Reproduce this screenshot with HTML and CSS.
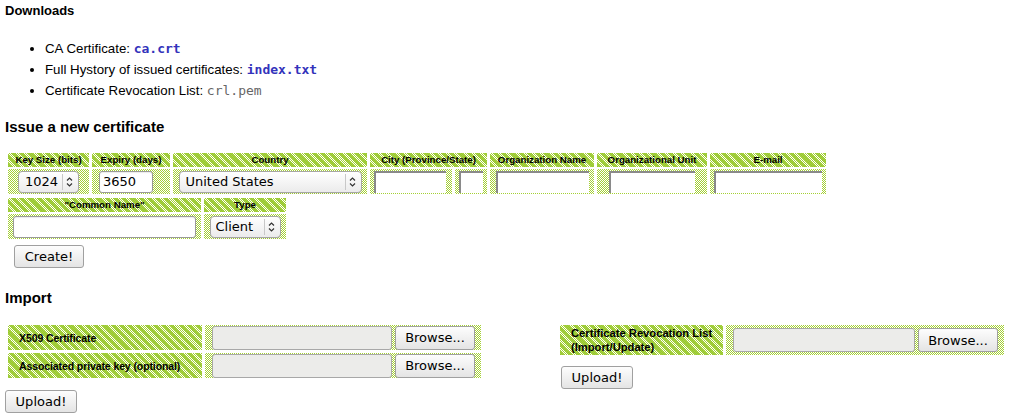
FILE: index.html
```html
<!DOCTYPE html>
<html>
<head>
<meta charset="utf-8">
<link rel="stylesheet" href="styles.css">
</head>
<body>
<h3 class="h-small">Downloads</h3>
<ul class="downloads">
  <li>CA Certificate: <a class="file" href="#">ca.crt</a></li>
  <li>Full Hystory of issued certificates: <a class="file" href="#">index.txt</a></li>
  <li>Certificate Revocation List: <span class="file-off">crl.pem</span></li>
</ul>

<h2 class="h-big h-issue">Issue a new certificate</h2>
<form class="issue">
  <table class="grid grid-top">
    <tr class="head">
      <th class="c-key">Key Size (bits)</th>
      <th class="c-exp">Expiry (days)</th>
      <th class="c-country">Country</th>
      <th colspan="2">City (Province/State)</th>
      <th class="c-org">Organization Name</th>
      <th class="c-unit">Organizational Unit</th>
      <th class="c-mail">E-mail</th>
    </tr>
    <tr class="data">
      <td class="c-key">
        <span class="sel sel-key"><select><option>1024</option></select><svg class="arr" width="14" height="20" viewBox="0 0 14 20"><line x1="0.5" y1="2" x2="0.5" y2="18" stroke="#c8c8c8"/><path d="M5 8.5 L7.5 6 L10 8.5 M5 11.5 L7.5 14 L10 11.5" fill="none" stroke="#333" stroke-width="1.2"/></svg></span>
      </td>
      <td class="c-exp"><input class="txt txt-exp" type="text" value="3650"></td>
      <td class="c-country">
        <span class="sel sel-country"><select><option>United States</option></select><svg class="arr" width="14" height="20" viewBox="0 0 14 20"><line x1="0.5" y1="2" x2="0.5" y2="18" stroke="#c8c8c8"/><path d="M5 8.5 L7.5 6 L10 8.5 M5 11.5 L7.5 14 L10 11.5" fill="none" stroke="#333" stroke-width="1.2"/></svg></span>
      </td>
      <td class="c-city"><input class="old old-city" type="text"></td>
      <td class="c-state"><input class="old old-state" type="text"></td>
      <td class="c-org"><input class="old old-org" type="text"></td>
      <td class="c-unit"><input class="old old-unit" type="text"></td>
      <td class="c-mail"><input class="old old-mail" type="text"></td>
    </tr>
  </table>
  <table class="grid grid-second">
    <tr class="head">
      <th class="c-cn">"Common Name"</th>
      <th class="c-type">Type</th>
    </tr>
    <tr class="data">
      <td class="c-cn"><input class="txt txt-cn" type="text"></td>
      <td class="c-type">
        <span class="sel sel-type"><select><option>Client</option></select><svg class="arr" width="14" height="20" viewBox="0 0 14 20"><line x1="0.5" y1="2" x2="0.5" y2="18" stroke="#c8c8c8"/><path d="M5 8.5 L7.5 6 L10 8.5 M5 11.5 L7.5 14 L10 11.5" fill="none" stroke="#333" stroke-width="1.2"/></svg></span>
      </td>
    </tr>
  </table>
  <button class="btn btn-create" type="button">Create!</button>
</form>

<h2 class="h-big h-import">Import</h2>
<div class="import">
  <form class="imp imp-left">
    <table class="grid grid-imp">
      <tr class="imp-row">
        <th class="lbl lbl-left">X509 Certificate</th>
        <td class="fld"><span class="file-in"><input class="file-txt" type="text" disabled><button class="btn btn-browse" type="button">Browse...</button></span></td>
      </tr>
      <tr class="imp-row">
        <th class="lbl lbl-left">Associated private key (optional)</th>
        <td class="fld"><span class="file-in"><input class="file-txt" type="text" disabled><button class="btn btn-browse" type="button">Browse...</button></span></td>
      </tr>
    </table>
    <button class="btn btn-upload btn-upload-left" type="button">Upload!</button>
  </form>
  <form class="imp imp-right">
    <table class="grid grid-imp">
      <tr class="imp-row">
        <th class="lbl lbl-right">Certificate Revocation List (Import/Update)</th>
        <td class="fld"><span class="file-in"><input class="file-txt" type="text" disabled><button class="btn btn-browse" type="button">Browse...</button></span></td>
      </tr>
    </table>
    <button class="btn btn-upload btn-upload-right" type="button">Upload!</button>
  </form>
</div>
</body>
</html>
```

FILE: styles.css
```css
html, body {
  background: #fff;
}
body {
  margin: 0;
  padding: 3px 5px 0 5px;
  font-family: "Liberation Sans", Arial, sans-serif;
  font-size: 13px;
  color: #000;
}
.h-small {
  font-size: 13px;
  font-weight: bold;
  margin: 0;
  line-height: 15px;
}
.downloads {
  margin: 20px 0 0 0;
  padding: 0 0 0 40px;
  line-height: 21px;
  font-size: 13.3px;
}
.downloads li {
  height: 21px;
}
.file {
  font-family: "DejaVu Sans Mono", monospace;
  font-weight: bold;
  color: #3333bb;
  text-decoration: none;
  font-size: 13px;
}
.file-off {
  font-family: "DejaVu Sans Mono", monospace;
  color: #666;
  font-size: 13px;
}
.h-big {
  font-size: 15px;
  font-weight: bold;
  margin: 0;
  line-height: 18px;
}
.h-issue {
  margin-top: 17px;
}
.issue {
  margin: 0;
}
.grid {
  border-collapse: separate;
  border-spacing: 3px 2px;
  margin-left: 0;
  table-layout: fixed;
}
.grid-top {
  margin-top: 15px;
}
.grid th, .grid td {
  padding: 0;
}
.head th {
  font-size: 9.7px;
  font-weight: bold;
  height: 14px;
  line-height: 14px;
  text-align: center;
  white-space: nowrap;
  background:
    repeating-linear-gradient(45deg, rgba(150, 200, 40, 0.85) 0 3px, rgba(255, 255, 255, 0) 3px 6px),
    conic-gradient(#a5d035 25%, #ffffff 0 50%, #a5d035 0 75%, #ffffff 0) 0 0 / 2px 2px;
}
.data td {
  height: 25px;
  text-align: center;
  vertical-align: middle;
  background: conic-gradient(#a5d035 25%, #ffffff 0 50%, #a5d035 0 75%, #ffffff 0) 0 0 / 2px 2px;
}
.c-key { width: 81px; }
.c-exp { width: 78px; }
.c-country { width: 194px; }
.c-city { width: 82px; }
.c-state { width: 32px; }
.c-org { width: 104px; }
.c-unit { width: 110px; }
.c-mail { width: 116px; }
.c-cn { width: 193px; }
.c-type { width: 82px; }

.sel {
  position: relative;
  display: inline-block;
  vertical-align: middle;
}
.sel select {
  appearance: none;
  -webkit-appearance: none;
  font-family: "DejaVu Sans", sans-serif;
  font-size: 13px;
  color: #000;
  height: 22px;
  border: 1px solid #a6a6a6;
  border-radius: 4px;
  background: linear-gradient(#ffffff, #ebebeb);
  padding: 0 20px 0 6px;
  margin: 0;
  box-shadow: 0 1px 0 rgba(0,0,0,0.05);
  text-align: left;
}
.sel .arr {
  position: absolute;
  right: 3px;
  top: 1px;
  pointer-events: none;
}
.sel-key select { width: 61px; padding-left: 6px; }
.sel-country select { width: 183px; padding-left: 6px; }
.sel-type select { width: 71px; padding-left: 5px; }

.txt {
  font-family: "DejaVu Sans", sans-serif;
  font-size: 13px;
  height: 22px;
  box-sizing: border-box;
  border: 1px solid #9a9a9a;
  border-radius: 3px;
  background: #fff;
  padding: 0 3px;
  margin: 0;
  vertical-align: middle;
  box-shadow: inset 0 1px 1px rgba(0,0,0,0.08);
}
.txt-exp { width: 54px; margin-left: -10px; }
.txt-cn { width: 183px; }

.old {
  box-sizing: border-box;
  height: 22px;
  margin: 0;
  border: 0;
  border-top: 2px solid #8a8a8a;
  border-left: 2px solid #8a8a8a;
  background: #fff;
  vertical-align: middle;
  padding: 0;
}
.old-city { width: 72px; margin-left: -2px; }
.old-state { width: 24px; }
.old-org { width: 93px; }
.old-unit { width: 86px; }
.old-mail { width: 108px; }

.btn {
  font-family: "DejaVu Sans", sans-serif;
  font-size: 13px;
  color: #000;
  border: 1px solid #a0a0a0;
  border-radius: 3px;
  background: linear-gradient(#fdfdfd, #e4e4e4);
  padding: 0;
  margin: 0;
  box-sizing: border-box;
  height: 23px;
}
.btn-create {
  display: block;
  width: 70px;
  margin: 4px 0 0 9px;
}
.h-import {
  margin-top: 21px;
}
.import {
  display: flex;
  align-items: flex-start;
  margin-top: 15px;
}
.imp {
  margin: 0;
}
.imp-right {
  margin-left: 73px;
  margin-top: 0;
}
.grid-imp {
  border-spacing: 3px 3px;
}
.imp-row th, .imp-row td {
  background:
    repeating-linear-gradient(45deg, rgba(150, 200, 40, 0.85) 0 3px, rgba(255, 255, 255, 0) 3px 6px),
    conic-gradient(#a5d035 25%, #ffffff 0 50%, #a5d035 0 75%, #ffffff 0) 0 0 / 2px 2px;
}
.imp-row td.fld {
  background: conic-gradient(#a5d035 25%, #ffffff 0 50%, #a5d035 0 75%, #ffffff 0) 0 0 / 2px 2px;
  height: 25px;
  vertical-align: middle;
  padding: 0 6px 0 7px;
}
.lbl {
  font-size: 10.5px;
  font-weight: bold;
  text-align: left;
  vertical-align: middle;
  line-height: 12px;
}
.lbl-left {
  width: 183px;
  padding-left: 11px !important;
  letter-spacing: -0.1px;
}
.lbl-right {
  width: 152px;
  padding: 1px 0 1px 11px !important;
  white-space: normal;
  font-size: 11.2px;
  line-height: 14px;
}
.file-in {
  display: flex;
  gap: 3px;
  align-items: center;
}
.file-txt {
  box-sizing: border-box;
  height: 24px;
  width: 180px;
  border: 1px solid #a8a8a8;
  border-radius: 3px;
  background: #ececea;
  margin: 0;
  padding: 0;
}
.imp-right .file-txt { width: 182px; }
.btn-browse {
  width: 80px;
  height: 24px;
}
.btn-upload {
  display: block;
  width: 72px;
}
.btn-upload-left {
  margin: 9px 0 0 0;
}
.btn-upload-right {
  margin: 8px 0 0 4px;
}
```
